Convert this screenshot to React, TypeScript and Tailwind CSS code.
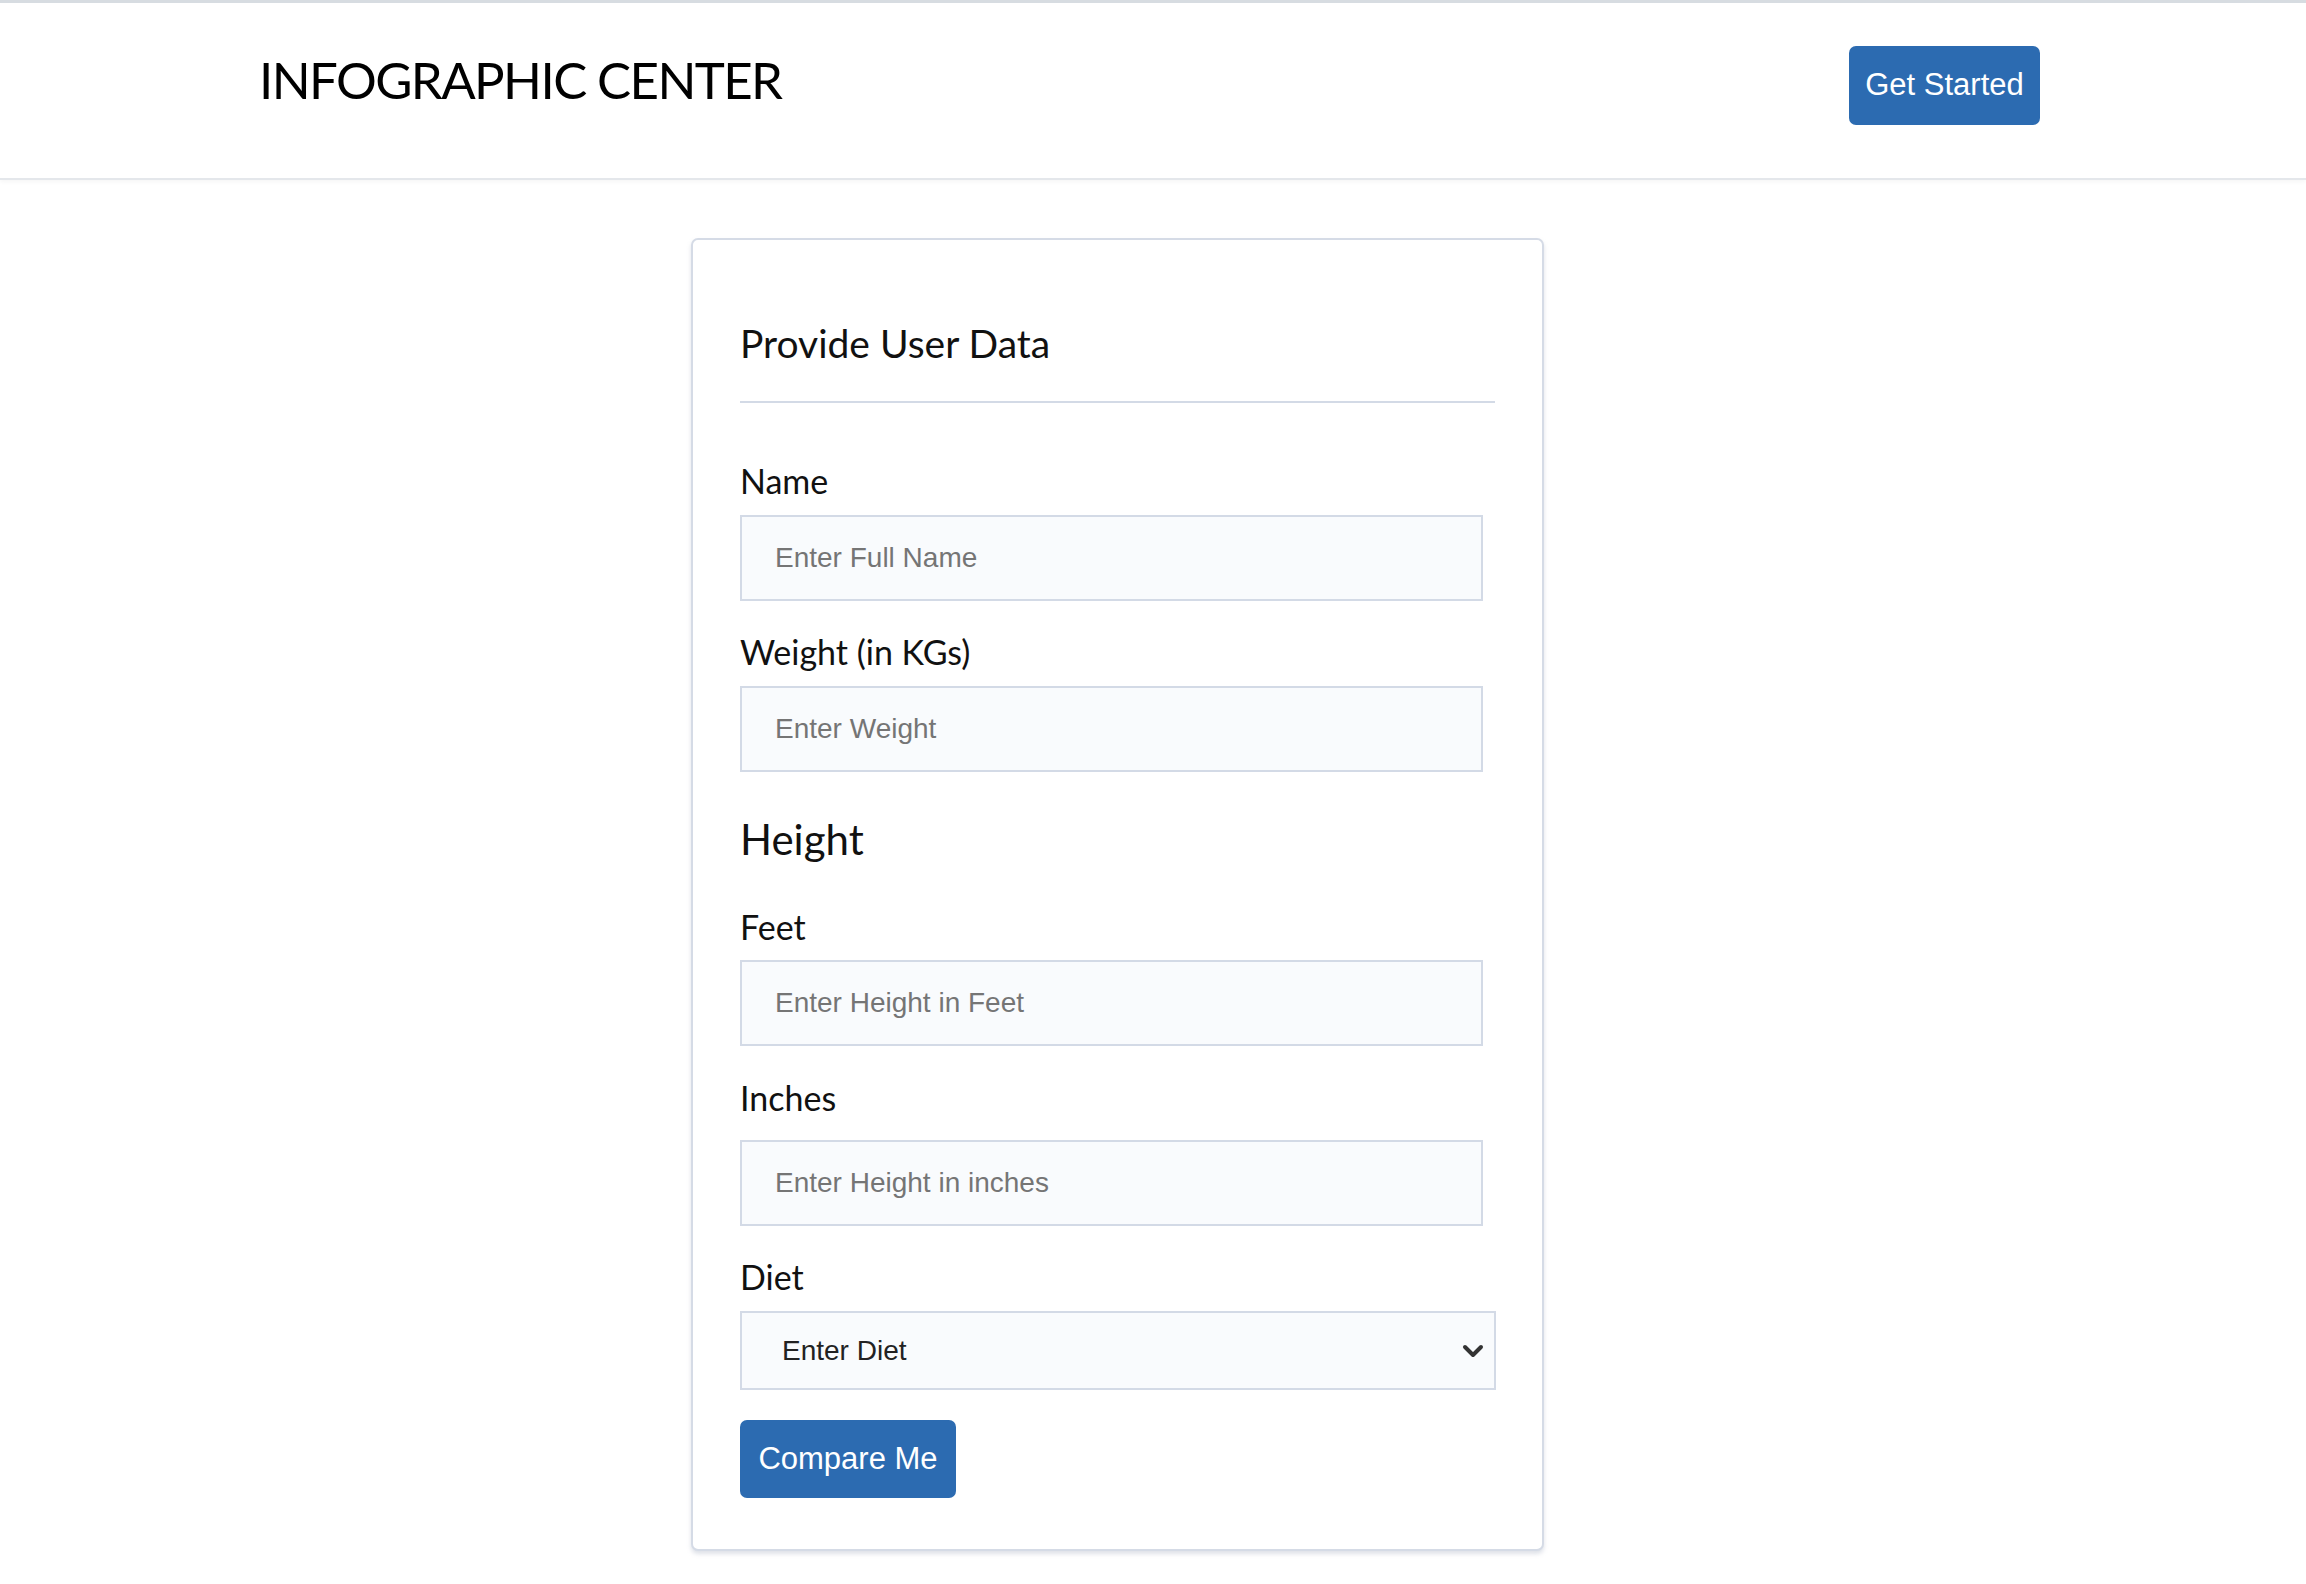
import React from 'react';

const labelCls = "block text-[34px] leading-[1.2] text-[#111] font-['Lato',sans-serif]";
const inputCls =
  "block w-[743px] h-[86px] bg-[#f9fbfd] border-2 border-[#d3dae6] px-[33px] text-[28px] text-[#222] placeholder:text-[#757575] font-['Liberation_Sans',Arial,sans-serif] outline-none";

export default function App() {
  return (
    <div className="min-h-screen bg-white">
      {/* Header */}
      <header className="h-[180px] border-t-[3px] border-b-2 border-t-[#d7dce1] border-b-[#e4e7eb] shadow-[0_2px_4px_rgba(0,0,0,0.04)] bg-white">
        <div className="flex items-start justify-between pl-[259px] pr-[266px] pt-[43px]">
          <h1 className="text-[51px] leading-[1.2] text-black font-['Lato',sans-serif] tracking-[-1.6px] mt-[3px]">
            INFOGRAPHIC CENTER
          </h1>
          <button className="w-[191px] h-[79px] rounded-[7px] bg-[#2c6bb1] text-white text-[31px] font-['Liberation_Sans',Arial,sans-serif]">
            Get Started
          </button>
        </div>
      </header>

      {/* Form card */}
      <main className="pt-[58px] pb-[34px]">
        <div className="ml-[691px] w-[853px] rounded-[7px] border-2 border-[#d5dbe6] shadow-[0_3px_4px_rgba(160,170,190,0.35)] px-[47px] pt-[80px] pb-[51px] bg-white">
          <h2 className="text-[39px] leading-[1.2] text-[#111] font-['Lato',sans-serif]">Provide User Data</h2>
          <div className="mt-[34px] h-[2px] bg-[#d3dae6]" />

          <label className={`${labelCls} mt-[58px]`}>Name</label>
          <input className={`${inputCls} mt-[13px]`} placeholder="Enter Full Name" />

          <label className={`${labelCls} mt-[31px]`}>Weight (in KGs)</label>
          <input className={`${inputCls} mt-[14px]`} placeholder="Enter Weight" />

          <h3 className="mt-[42px] text-[42px] leading-[1.2] text-[#111] font-['Lato',sans-serif]">Height</h3>

          <label className={`${labelCls} mt-[42px]`}>Feet</label>
          <input className={`${inputCls} mt-[12px]`} placeholder="Enter Height in Feet" />

          <label className={`${labelCls} mt-[32px]`}>Inches</label>
          <input className={`${inputCls} mt-[22px]`} placeholder="Enter Height in inches" />

          <label className={`${labelCls} mt-[31px]`}>Diet</label>
          <div className="relative mt-[13px] w-[756px]">
            <select className="block w-full h-[79px] appearance-none bg-[#f9fbfd] border-2 border-[#d3dae6] pl-[40px] pr-[60px] text-[28px] text-[#222] font-['Liberation_Sans',Arial,sans-serif] outline-none">
              <option>Enter Diet</option>
              <option>Vegetarian</option>
              <option>Non-Vegetarian</option>
            </select>
            <svg
              className="pointer-events-none absolute right-[12px] top-1/2 -translate-y-1/2"
              width="22"
              height="16"
              viewBox="0 0 22 16"
              fill="none"
            >
              <path d="M3 4l8 8 8-8" stroke="#333" strokeWidth="4" strokeLinecap="round" strokeLinejoin="round" />
            </svg>
          </div>

          <button className="mt-[30px] w-[216px] h-[78px] rounded-[7px] bg-[#2c6bb1] text-white text-[31px] font-['Liberation_Sans',Arial,sans-serif]">
            Compare Me
          </button>
        </div>
      </main>
    </div>
  );
}
